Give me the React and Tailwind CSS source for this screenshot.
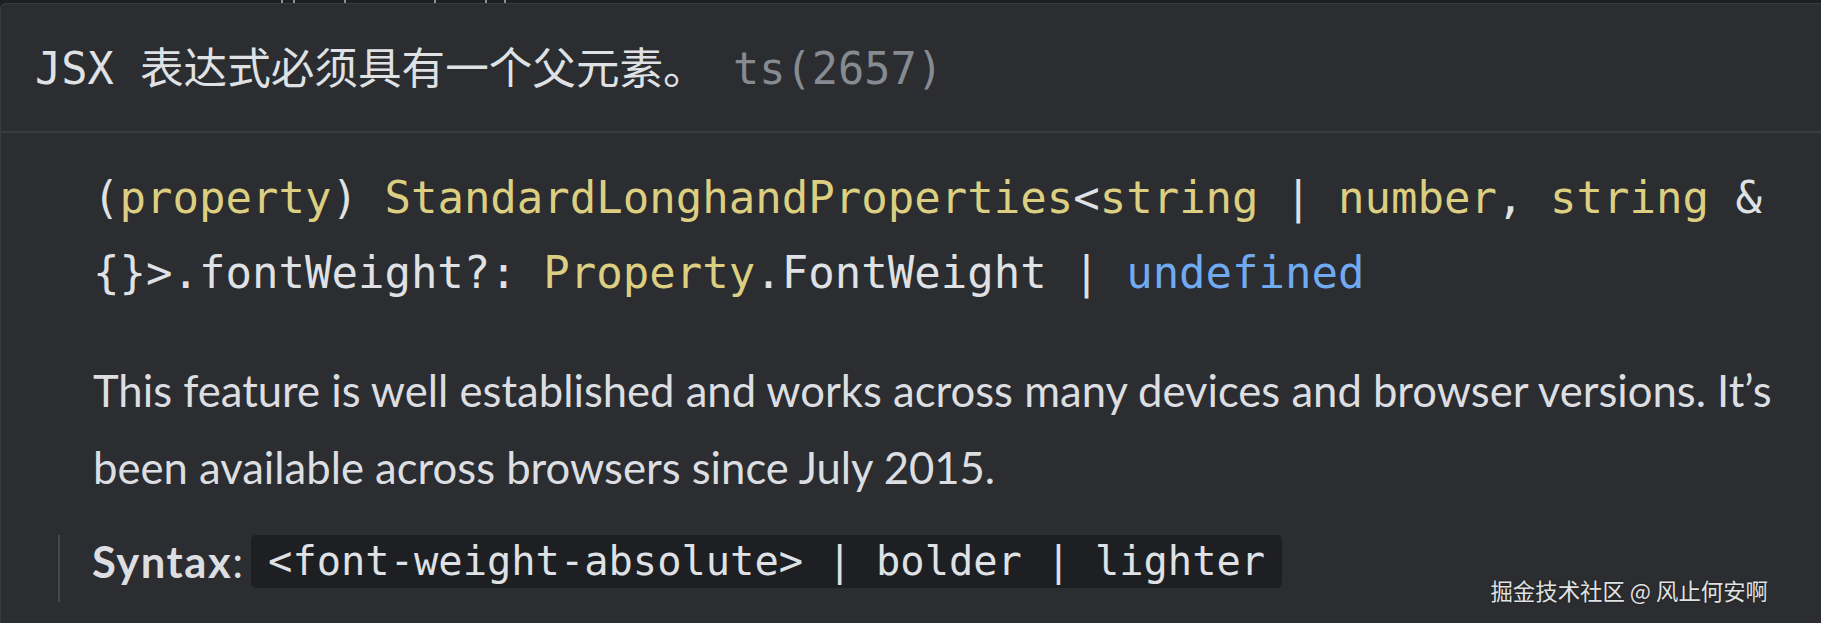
import React from "react";

const mono = { fontFamily: '"DejaVu Sans Mono", "Noto Sans CJK SC", monospace' };
const sans = { fontFamily: 'Lato, "Noto Sans", sans-serif' };

export default function App() {
  const Y = ({ children }) => <span className="text-[#dccf82]">{children}</span>;
  const W = ({ children }) => <span className="text-[#dfe1e5]">{children}</span>;
  return (
    <div className="relative w-[1821px] h-[623px] overflow-hidden bg-[#1e1f22]">
      {/* top strip with clipped glyph bottoms from the editor behind */}
      <div className="h-[3px] flex items-end">
        <div className="w-[281px]" />
        <div className="w-[2px] h-[3px] bg-[#8c8e92]" />
        <div className="w-[10px]" />
        <div className="w-[2px] h-[3px] bg-[#8c8e92]" />
        <div className="w-[49px]" />
        <div className="w-[2px] h-[3px] bg-[#8c8e92]" />
        <div className="w-[88px]" />
        <div className="w-[2px] h-[3px] bg-[#8c8e92]" />
        <div className="w-[49px]" />
        <div className="w-[2px] h-[3px] bg-[#8c8e92]" />
        <div className="w-[17px]" />
        <div className="w-[2px] h-[3px] bg-[#8c8e92]" />
      </div>

      <div className="h-[620px] bg-[#2b2d30] border-t border-l border-[#393b40] rounded-tl-[6px]">
        {/* header */}
        <div
          className="h-[127px] pl-[34px] pt-[39px] text-[43.6px] leading-[53px] whitespace-nowrap"
          style={mono}
        >
          <span className="text-[#dfe1e5]">JSX 表达式必须具有一个父元素。</span>
          <span className="text-[#868a91]"> ts(2657)</span>
        </div>
        <div className="h-[2px] bg-[#3a3c40]" />

        {/* body */}
        <div className="pl-[92px] pt-[27px]">
          <div className="text-[44px] leading-[75px] whitespace-nowrap" style={mono}>
            <div>
              <W>(</W>
              <Y>property</Y>
              <W>) </W>
              <Y>StandardLonghandProperties</Y>
              <W>&lt;</W>
              <Y>string</Y>
              <W> | </W>
              <Y>number</Y>
              <W>, </W>
              <Y>string</Y>
              <W> &amp;</W>
            </div>
            <div>
              <W>{"{}>.fontWeight?: "}</W>
              <Y>Property</Y>
              <W>.FontWeight | </W>
              <span className="text-[#70aaf0]">undefined</span>
            </div>
          </div>

          <div
            className="mt-[42px] text-[43.6px] leading-[77px] text-[#dcdee2] whitespace-nowrap"
            style={sans}
          >
            <div>This feature is well established and works across many devices and browser versions. It’s</div>
            <div>been available across browsers since July 2015.</div>
          </div>
        </div>

        {/* syntax blockquote */}
        <div className="ml-[57px] mt-[34px] border-l-2 border-[#45474b] pl-[32px] pb-[14px]">
          <div
            className="-mt-[5px] h-[53px] flex items-center text-[43.6px] text-[#dcdee2] whitespace-nowrap"
            style={sans}
          >
            <span className="font-bold tracking-[1.5px]">Syntax</span>
            <span>:</span>
            <span
              className="ml-[8px] h-[53px] flex items-center px-[17px] rounded-[5px] bg-[#1e1f22] text-[40.4px] text-[#dfe1e5]"
              style={mono}
            >
              &lt;font-weight-absolute&gt; | bolder | lighter
            </span>
          </div>
        </div>
      </div>

      {/* watermark */}
      <div
        className="absolute right-[53px] bottom-[19px] text-[22.4px] leading-[28px] text-[#e2e2e2] whitespace-nowrap"
        style={{ fontFamily: '"Noto Sans CJK SC", sans-serif', textShadow: "0 0 2px rgba(0,0,0,0.6)" }}
      >
        掘金技术社区 @ 风止何安啊
      </div>
    </div>
  );
}
